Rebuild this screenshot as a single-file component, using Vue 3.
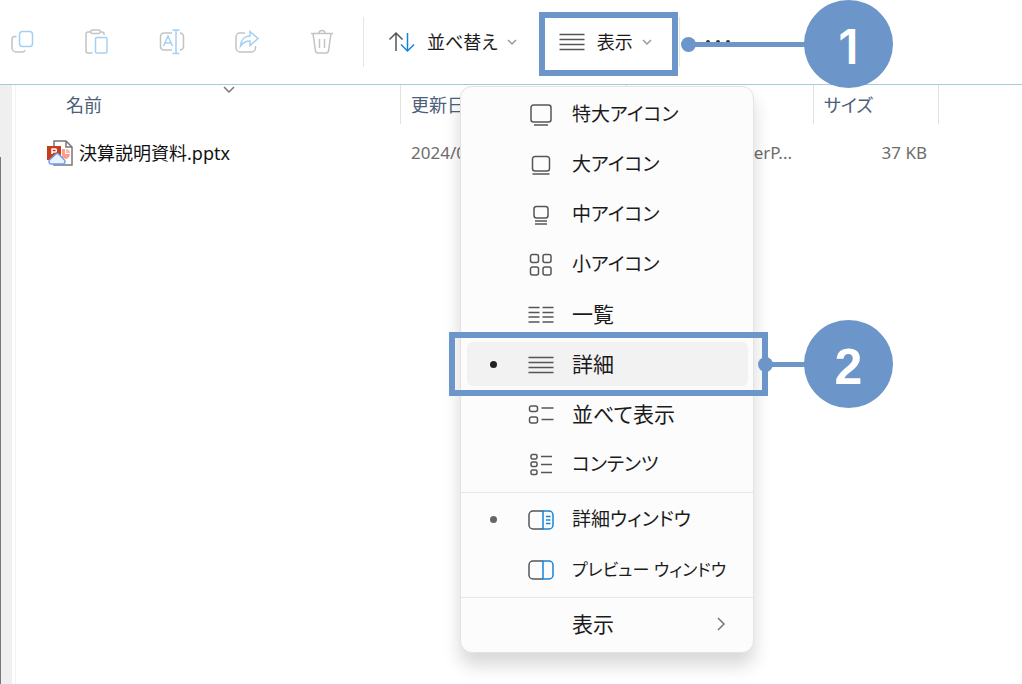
<script setup>
const iconItems = [
  { label: '特大アイコン', icon: 'xl', size: 'kana' },
  { label: '大アイコン', icon: 'lg', size: 'kana' },
  { label: '中アイコン', icon: 'md', size: 'kana' },
  { label: '小アイコン', icon: 'sm', size: 'kana' },
  { label: '一覧', icon: 'list' },
  { label: '詳細', icon: 'details', checked: true, active: true },
  { label: '並べて表示', icon: 'tiles' },
  { label: 'コンテンツ', icon: 'content', size: 'kana' },
]
const paneItems = [
  { label: '詳細ウィンドウ', icon: 'detailPane', size: 'kana', checked: true, soft: true },
  { label: 'プレビュー ウィンドウ', icon: 'previewPane', size: 'long' },
]
const groups = [iconItems, paneItems, [{ label: '表示', icon: '', submenu: true }]]

const g = '#555'
const b = '#1683d8'
const icons = {
  xl: [['M5.500 3h15a2.500 2.500 0 0 1 2.500 2.500v12a2.500 2.500 0 0 1-2.500 2.500h-15a2.500 2.500 0 0 1-2.500-2.500v-12a2.500 2.500 0 0 1 2.500-2.500z M6 23h14', g]],
  lg: [['M7 4.500h12a2.500 2.500 0 0 1 2.500 2.500v9.500a2.500 2.500 0 0 1-2.500 2.500h-12a2.500 2.500 0 0 1-2.500-2.500v-9.500a2.500 2.500 0 0 1 2.500-2.500z M4.500 22h17', g]],
  md: [['M8.500 4.500h9a2.500 2.500 0 0 1 2.500 2.500v6.500a2.500 2.500 0 0 1-2.500 2.500h-9a2.500 2.500 0 0 1-2.500-2.500v-6.500a2.500 2.500 0 0 1 2.500-2.500z M7 19h12 M7 22h12', g]],
  sm: [['M4.500 2.500h4a2 2 0 0 1 2 2v4a2 2 0 0 1-2 2h-4a2 2 0 0 1-2-2v-4a2 2 0 0 1 2-2z M17 2.500h4a2 2 0 0 1 2 2v4a2 2 0 0 1-2 2h-4a2 2 0 0 1-2-2v-4a2 2 0 0 1 2-2z M4.500 15h4a2 2 0 0 1 2 2v4a2 2 0 0 1-2 2h-4a2 2 0 0 1-2-2v-4a2 2 0 0 1 2-2z M17 15h4a2 2 0 0 1 2 2v4a2 2 0 0 1-2 2h-4a2 2 0 0 1-2-2v-4a2 2 0 0 1 2-2z', g]],
  list: [['M.5 5.500h11M.5 10.500h11M.5 15h11M.5 20h11M14.500 5.500h11M14.500 10.500h11M14.500 15h11M14.500 20h11', g]],
  details: [['M.5 5.500h25M.5 10.500h25M.5 15.500h25M.5 20.500h25', g]],
  tiles: [['M3.500 4h4a2 2 0 0 1 2 2v1.500a2 2 0 0 1-2 2h-4a2 2 0 0 1-2-2v-1.500a2 2 0 0 1 2-2z M3.500 15h4a2 2 0 0 1 2 2v2a2 2 0 0 1-2 2h-4a2 2 0 0 1-2-2v-2a2 2 0 0 1 2-2z M13.500 6h12M13.500 17.500h12', g]],
  content: [['M4.500 2.500h3a1.500 1.500 0 0 1 1.500 1.500v1.500a1.500 1.500 0 0 1-1.500 1.500h-3a1.500 1.500 0 0 1-1.500-1.500v-1.500a1.500 1.500 0 0 1 1.500-1.500z M4.500 10h3a1.500 1.500 0 0 1 1.500 1.500v1.500a1.500 1.500 0 0 1-1.500 1.500h-3a1.500 1.500 0 0 1-1.500-1.500v-1.500a1.500 1.500 0 0 1 1.500-1.500z M4.500 18h3a1.500 1.500 0 0 1 1.500 1.500v1.500a1.500 1.500 0 0 1-1.500 1.500h-3a1.500 1.500 0 0 1-1.500-1.500v-1.500a1.500 1.500 0 0 1 1.500-1.500z M13 4.500h11M13 12.500h11M13 20.500h11', g]],
  detailPane: [
    ['M15 4H5a4 4 0 0 0-4 4v10a4 4 0 0 0 4 4h10', g],
    ['M15 4v18h6a4 4 0 0 0 4-4V8a4 4 0 0 0-4-4z M18 9.500h4.500M18 13h4.500M18 16.500h4.500', b],
  ],
  previewPane: [
    ['M15 4H5a4 4 0 0 0-4 4v10a4 4 0 0 0 4 4h10', g],
    ['M15 4v18h6a4 4 0 0 0 4-4V8a4 4 0 0 0-4-4z', b],
  ],
}

const lg = '#c3c3c3'
const lb = '#a5d0f4'
const tools = [
  { name: 'コピー', paths: [['M7.500 8.500H6a3 3 0 0 0-3 3V20a4 4 0 0 0 4 4h6a3 3 0 0 0 3-2', lg], ['M13.500 3.500h7a3 3 0 0 1 3 3v9a3 3 0 0 1-3 3h-7a3 3 0 0 1-3-3v-9a3 3 0 0 1 3-3z', lb]] },
  { name: '貼り付け', paths: [['M7 4H4a2 2 0 0 0-2 2v17a2 2 0 0 0 2 2h4.500 M16 4h2a2 2 0 0 1 2 2v1 M8.500 2h6a1.500 1.500 0 0 1 0 3.500h-6a1.500 1.500 0 0 1 0-3.500z', lg], ['M13 9.500h8.500a1.500 1.500 0 0 1 1.500 1.500v12.500a1.500 1.500 0 0 1-1.500 1.500H13a1.500 1.500 0 0 1-1.500-1.500V11a1.500 1.500 0 0 1 1.500-1.500z', lb]] },
  { name: '名前の変更', paths: [['M13 5H5a3.500 3.500 0 0 0-3.500 3.500v10A3.500 3.500 0 0 0 5 22h8 M21 5a3.500 3.500 0 0 1 3.500 3.500v10a3.500 3.500 0 0 1-3.500 3.500', lg], ['M13.500 2h7M17 2v23.500M13.500 25.500h7 M4.500 18l4.500-10 4.500 10M6 15h6', lb]] },
  { name: '共有', paths: [['M11 5H6a4 4 0 0 0-4 4v11a4 4 0 0 0 4 4h11.500a4 4 0 0 0 4-4v-2', lg], ['M16 3.500l8 7-8 7v-4.500c-4 0-7 1.500-9.500 5 .5-6 4-10 9.500-10z', lb]] },
  { name: '削除', paths: [['M2 5.500h22M4 5.500l2.500 17.500a2.500 2.500 0 0 0 2.500 2h8a2.500 2.500 0 0 0 2.500-2l2.500-17.500M10 5.500c0-4 6-4 6 0M10.500 11v9M15.500 11v9', lg]] },
]
</script>

<template>
  <div class="window">
    <header class="toolbar">
      <div class="tools">
        <button v-for="t in tools" :key="t.name" class="tool" :aria-label="t.name" disabled>
          <svg class="icon" viewBox="0 0 26 28"><path v-for="p in t.paths" :key="p[0]" :d="p[0]" :stroke="p[1]" /></svg>
        </button>
      </div>
      <span class="rule"></span>
      <button class="command">
        <svg class="icon" viewBox="0 0 26 28">
          <path d="M7 23V5M.5 11.500L7 5l6.500 6.500" stroke="#555" />
          <path d="M18.500 5v18M12 16.500l6.500 6.500L25 16.500" stroke="#1683d8" />
        </svg>
        <span>並べ替え</span>
        <svg class="chevron" viewBox="0 0 10 8"><path d="M1 2l4 4 4-4" /></svg>
      </button>
      <button class="command view" aria-haspopup="menu" aria-expanded="true">
        <svg class="icon" viewBox="0 0 26 28"><path d="M.5 6.500h25M.5 11.500h25M.5 16.500h25M.5 21.500h25" stroke="#555" /></svg>
        <span>表示</span>
        <svg class="chevron" viewBox="0 0 10 8"><path d="M1 2l4 4 4-4" /></svg>
      </button>
      <span class="rule after"></span>
      <button class="more" aria-label="その他">
        <svg viewBox="0 0 26 6"><circle cx="3" cy="3" r="2" /><circle cx="13" cy="3" r="2" /><circle cx="23" cy="3" r="2" /></svg>
      </button>
    </header>

    <div class="body">
      <aside class="side"><span class="thumb"></span></aside>
      <main class="files">
        <table>
          <colgroup><col class="c-name" /><col class="c-date" /><col class="c-type" /><col class="c-size" /><col /></colgroup>
          <thead>
            <tr>
              <th class="name">
                <span>名前</span>
                <svg class="sort" viewBox="0 0 12 7"><path d="M1 1l5 5 5-5" /></svg>
              </th>
              <th>更新日</th>
              <th aria-label="種類"></th>
              <th>サイズ</th>
              <th class="rest"></th>
            </tr>
          </thead>
          <tbody>
            <tr>
              <td class="name">
                <div class="file">
                  <svg viewBox="0 0 26 26">
                    <path d="M7 1h12l6 6v18H7z" fill="#fff" stroke="#777" stroke-width="1.500" />
                    <path d="M19 1v6h6" fill="none" stroke="#777" stroke-width="1.500" />
                    <path d="M15 9h3v5h5a6 6 0 0 1-4 5l-4-2z" fill="#ff9c83" />
                    <path d="M19 9a4 4 0 0 1 4 4h-4z" fill="#ffb8a5" />
                    <path d="M0 6h14v14H0z" fill="#c43e1c" />
                    <path d="M5 14V9h3a1.500 1.500 0 0 1 0 3H5" fill="none" stroke="#fff" stroke-width="1.500" />
                    <path d="M4 24a2.500 2.500 0 0 1-1-4.500l6-5.500a2 2 0 0 1 2.500 0l5.500 5.500a2.500 2.500 0 0 1-1 4.500z" fill="#e9f3ff" stroke="#6f9ff0" stroke-width="1.500" />
                  </svg>
                  <span>決算説明資料.pptx</span>
                </div>
              </td>
              <td>2024/0</td>
              <td class="type">werP...</td>
              <td class="size">37 KB</td>
              <td></td>
            </tr>
          </tbody>
        </table>
      </main>
    </div>

    <div class="menu" role="menu">
      <div v-for="(group, i) in groups" :key="i" class="group" role="group">
        <button v-for="item in group" :key="item.label" class="item" :class="{ active: item.active }" role="menuitem">
          <span class="mark"><span v-if="item.checked" class="bullet" :class="{ soft: item.soft }"></span></span>
          <svg class="glyph" viewBox="0 0 26 26"><path v-for="p in icons[item.icon] || []" :key="p[0]" :d="p[0]" :stroke="p[1]" /></svg>
          <span class="label" :class="item.size">{{ item.label }}</span>
          <svg v-if="item.submenu" class="next" viewBox="0 0 8 14"><path d="M1 1l6 6-6 6" /></svg>
        </button>
      </div>
    </div>

    <div class="frame first"></div>
    <div class="frame second"></div>
    <div class="callout one"><span class="dot"></span><span class="line"></span><span class="badge">1</span></div>
    <div class="callout two"><span class="dot"></span><span class="line"></span><span class="badge">2</span></div>
  </div>
</template>

<style>
html, body { height: 100%; }
body { margin: 0; overflow: hidden; background: #fff; }
#app { height: 100%; }
</style>

<style scoped>
.window {
  position: relative;
  display: flex;
  flex-direction: column;
  height: 100%;
  overflow: hidden;
  font-family: "Noto Sans", "Noto Sans CJK JP", sans-serif;
  font-feature-settings: "palt";
  color: #1b1b1b;
}
button { margin: 0; padding: 0; border: 0; background: none; font: inherit; font-feature-settings: inherit; color: inherit; }
svg { display: block; fill: none; stroke-width: 1.5; overflow: visible; flex: none; }
.toolbar { display: flex; align-items: center; height: 84px; padding-left: 9px; border-bottom: 1px solid #a9cbd8; flex: none; }
.tools { display: flex; gap: 49px; }
.icon { width: 26px; height: 28px; }
.rule { width: 1px; height: 50px; margin: 0 25px 0 28px; background: #e5e5e5; }
.command { display: flex; align-items: center; font-size: 18px; line-height: 24px; }
.command span { margin: 0 9px 0 12px; }
.command.view { margin-left: 42px; }
.chevron { width: 10px; height: 8px; stroke: #999; }
.rule.after { margin: 0 25px 0 27px; }
.more svg { width: 26px; height: 6px; fill: #333; }
.body { display: flex; flex: 1; min-height: 0; }
.side { width: 12px; background: #efefef; flex: none; }
.thumb { display: block; width: 1px; height: 100%; margin-top: 72px; background: #777; }
.files { flex: 1; min-width: 0; margin-left: 3px; border-left: 1px solid #f3f3f3; }
table { width: 100%; border-collapse: separate; border-spacing: 0; table-layout: fixed; font-size: 18px; line-height: 24px; }
.c-name { width: 385px; }
.c-date { width: 226px; }
.c-type { width: 187px; }
.c-size { width: 125px; }
th, td { box-sizing: border-box; padding: 0 0 0 10px; text-align: left; white-space: nowrap; font-weight: 400; }
th { position: relative; height: 39px; color: #4c607a; border-right: 1px solid #e2e2e2; }
th.rest { border: 0; }
td { height: 58px; font-size: 17px; color: #6d6d6d; }
th.name { padding-left: 50px; }
td.name { padding-left: 31px; font-size: 18px; color: #111; }
td.type { padding-right: 22px; text-align: right; }
td.size { padding-right: 12px; text-align: right; }
.sort { position: absolute; left: 207px; top: 1px; width: 12px; height: 7px; stroke: #777; }
.file { display: flex; align-items: center; gap: 6px; }
.file svg { width: 26px; height: 26px; }
.menu {
  position: absolute;
  left: 460px;
  top: 86px;
  box-sizing: border-box;
  width: 294px;
  padding: 2px 0 3px;
  border: 1px solid #e3e3e3;
  border-radius: 12px;
  background: #fcfcfc;
  box-shadow: 0 12px 18px rgba(0, 0, 0, 0.16);
}
.group + .group { margin-top: 3px; padding-top: 1px; border-top: 1px solid #e6e6e6; }
.item { position: relative; display: flex; align-items: center; width: 100%; height: 50px; padding: 0 28px 0 25px; font-size: 21px; text-align: left; }
.item.active::before { content: ""; position: absolute; inset: 3px 5px 3px 6px; border-radius: 6px; background: #f2f2f2; }
.item > * { position: relative; }
.mark { width: 42px; flex: none; }
.bullet { display: block; width: 7px; height: 7px; margin-left: 4px; border-radius: 50%; background: #222; }
.bullet.soft { background: #666; }
.glyph { width: 26px; height: 26px; margin-top: 2px; }
.label { flex: 1; margin-left: 18px; padding-bottom: 2px; white-space: nowrap; }
.label.kana { font-size: 19px; }
.label.long { font-size: 17px; }
.next { width: 8px; height: 14px; stroke: #777; }
.frame { position: absolute; box-sizing: border-box; height: 64px; border: 6px solid #6c95c9; }
.frame.first { left: 539px; top: 12px; width: 139px; }
.frame.second { left: 449px; top: 332px; width: 319px; }
.callout { position: absolute; display: flex; align-items: center; }
.callout.one { left: 681px; top: 0; width: 212px; }
.callout.two { left: 758px; top: 320px; width: 135px; }
.dot { width: 15px; height: 15px; border-radius: 50%; background: #6c95c9; }
.line { flex: 1; height: 5px; margin-left: -1px; margin-right: -1px; background: #6c95c9; }
.badge { box-sizing: border-box; display: flex; align-items: center; justify-content: center; width: 89px; height: 88px; padding-top: 5px; border-radius: 50%; background: #6c95c9; color: #fff; font: 600 48px/48px Inter, sans-serif; }
.two .badge { font: 700 50px/50px "Liberation Sans", sans-serif; }
</style>
